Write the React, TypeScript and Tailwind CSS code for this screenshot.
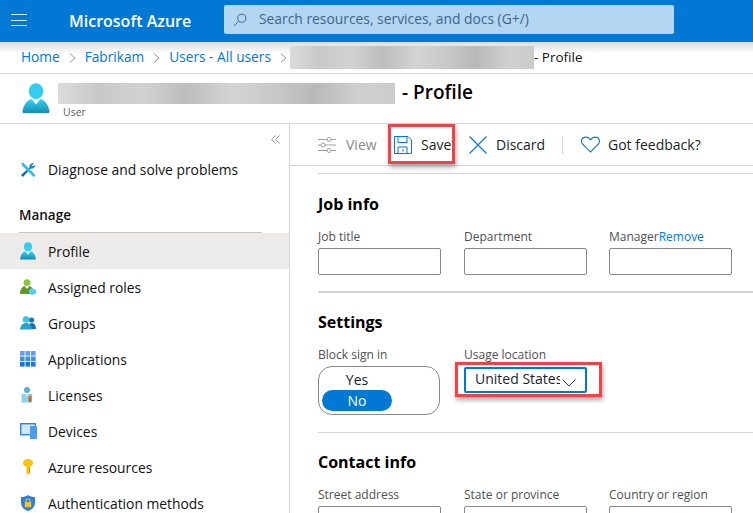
import React from 'react';

// shared svg defs live on each icon so the file stays a flat list of small components
const UserIcon = ({ className }: { className: string }) => (
  <svg viewBox="0 0 28 32" className={className}>
    <defs>
      <linearGradient id="ub" x1="0" y1="0" x2="0" y2="1">
        <stop offset="0" stopColor="#32d4f5" />
        <stop offset="1" stopColor="#198ab3" />
      </linearGradient>
    </defs>
    <ellipse cx="14" cy="8.5" rx="7.5" ry="8.2" fill="#32cdf0" />
    <path d="M1 31 C0 31 0 30 0.2 28.5 C1.5 22 5 17.5 9.5 16.5 L14 22 L18.5 16.5 C23 17.5 26.5 22 27.8 28.5 C28 30 28 31 27 31 Z" fill="url(#ub)" />
    <path d="M11 17.5 L14 22.5 L17 17.5 Z" fill="#fff" opacity="0.85" />
  </svg>
);

const WrenchIcon = () => (
  <svg viewBox="0 0 16 16" className="w-4 h-4">
    <path d="M3 15 L1 13 L10 5 L11 6 Z" fill="#0d6ba8" />
    <path d="M9.5 5.5 C9 3 11 0.5 14 1 L12 3.2 L13 4.2 L15.2 2.4 C15.6 5 13 7 10.8 6.6 Z" fill="#1f8dc9" />
    <path d="M1.5 1 L3 0.6 L15 12.5 L15 14 L13.5 15 L2 3.5 Z" fill="#32bdeb" />
  </svg>
);

const RolesIcon = () => (
  <svg viewBox="0 0 16 16" className="w-4 h-4">
    <circle cx="7" cy="3.6" r="3.4" fill="#86c440" />
    <path d="M0 15 C0 10 2.5 7.4 4.5 7 L7 10 L9.5 7 C12 7.4 13 10 13.5 15 Z" fill="#5e9624" />
    <path d="M12 9 L16 11 V14.5 L12 16 L9 14.5 V11 Z" fill="#59c9ef" />
  </svg>
);

const GroupsIcon = () => (
  <svg viewBox="0 0 16 16" className="w-4 h-4">
    <circle cx="11.6" cy="5" r="2.6" fill="#1a6fc2" />
    <path d="M8 14 C8 10 9.5 8 11.6 8 C14 8 16 10 16 14 Z" fill="#1a6fc2" />
    <circle cx="6" cy="4.4" r="3.2" fill="#32c4ea" />
    <path d="M0 14.5 C0.5 10.5 2.5 8 6 8 C9.5 8 11.5 10.5 12 14.5 Z" fill="#27a4cc" />
  </svg>
);

const AppsIcon = () => (
  <svg viewBox="0 0 16 16" className="w-4 h-4">
    {[0, 5.5, 11].map((y, r) =>
      [0, 5.5, 11].map((x) => (
        <rect key={`${x}-${y}`} x={x} y={y} width="4.6" height="4.6" fill={['#5ea0ef', '#3b8de8', '#1b74dc'][r]} />
      ))
    )}
  </svg>
);

const LicenseIcon = () => (
  <svg viewBox="0 0 16 16" className="w-4 h-4">
    <circle cx="7" cy="3" r="3" fill="#5aaed6" />
    <path d="M1.5 7 H12 V15.5 H1.5 Z" fill="#8cd0ec" />
    <path d="M6 7 L7 10 L8 7 Z" fill="#fff" />
    <circle cx="10" cy="10.5" r="2" fill="#e0762b" />
    <path d="M8.8 11.5 H11.2 V15.5 L10 14.5 L8.8 15.5 Z" fill="#c9571a" />
  </svg>
);

const DevicesIcon = () => (
  <svg viewBox="0 0 17 16" className="w-[17px] h-4 shrink-0">
    <rect x="0.7" y="0.7" width="14.6" height="11" fill="#cfe6fb" stroke="#2e86e4" strokeWidth="1.4" />
    <rect x="10" y="3" width="7" height="13" rx="0.8" fill="#4b9bf0" />
  </svg>
);

const KeyIcon = () => (
  <svg viewBox="0 0 16 16" className="w-4 h-4">
    <path d="M8 0 C11 0 13 1.5 13 4 C13 6 11.5 7.2 9.6 7.6 V13.5 L8 16 L6.4 14.5 V7.6 C4.5 7.2 3 6 3 4 C3 1.5 5 0 8 0 Z" fill="#fbc40a" />
    <rect x="9" y="8" width="1" height="6" fill="#e08e00" />
  </svg>
);

const ShieldIcon = () => (
  <svg viewBox="0 0 16 16" className="w-4 h-4">
    <path d="M8 0 C10 1.4 12.5 2 15 2 V8 C15 12 12 14.5 8 16 C4 14.5 1 12 1 8 V2 C3.5 2 6 1.4 8 0 Z" fill="#2f80dc" />
    <rect x="4.8" y="7" width="6.4" height="5.2" fill="#f7c325" />
    <path d="M6 7 V5.6 C6 3.4 10 3.4 10 5.6 V7" fill="none" stroke="#f7c325" strokeWidth="1.1" />
  </svg>
);

const navItems: { label: string; icon: React.ReactNode; active?: boolean }[] = [
  { label: 'Profile', icon: <UserIcon className="w-4 h-[18px]" />, active: true },
  { label: 'Assigned roles', icon: <RolesIcon /> },
  { label: 'Groups', icon: <GroupsIcon /> },
  { label: 'Applications', icon: <AppsIcon /> },
  { label: 'Licenses', icon: <LicenseIcon /> },
  { label: 'Devices', icon: <DevicesIcon /> },
  { label: 'Azure resources', icon: <KeyIcon /> },
  { label: 'Authentication methods', icon: <ShieldIcon /> },
];

const Chevron = () => (
  <svg viewBox="0 0 8 12" className="w-[7px] h-3 mx-[9px] shrink-0">
    <path d="M1 1 L7 6 L1 11" fill="none" stroke="#8a8886" strokeWidth="1" />
  </svg>
);

const Blur = ({ className }: { className: string }) => (
  <div className={`bg-[linear-gradient(90deg,#dcdcdc_0%,#c8c8c8_12%,#d2d2d2_25%,#bdbdbd_38%,#d4d4d4_52%,#c6c6c6_66%,#b9b9b9_76%,#d0d0d0_90%,#cbcbcb_100%)] ${className}`} />
);

const Field = ({ label, extra }: { label: string; extra?: string }) => (
  <div className="w-[123px] flex flex-col">
    <div className="text-[12px] leading-[16px] text-[#505050] whitespace-nowrap">
      {label}
      {extra && <span className="text-[#0078d4]">{extra}</span>}
    </div>
    <div className="mt-[3px] h-[27px] border border-[#8a8886] rounded-[2px] bg-white" />
  </div>
);

export default function App() {
  return (
    <div className="w-[753px] h-[513px] overflow-hidden bg-white flex flex-col font-['Open_Sans','Liberation_Sans',sans-serif] text-[#201f1e]">
      {/* top bar */}
      <header className="h-[42px] shrink-0 bg-[#0078d4] flex items-center">
        <div className="w-[16px] ml-[11px] -mt-[2px] flex flex-col gap-[4.5px]">
          <span className="h-px bg-[#d5e8f8]" />
          <span className="h-px bg-[#d5e8f8]" />
          <span className="h-px bg-[#d5e8f8]" />
        </div>
        <span className="ml-[42px] w-[155px] text-[16px] font-semibold text-white whitespace-nowrap">Microsoft Azure</span>
        <div className="w-[450px] h-[29px] -mt-[3px] bg-[#b3d6f2] rounded-[2px] flex items-center pl-[9px]">
          <svg viewBox="0 0 16 16" className="w-[14px] h-[14px] shrink-0">
            <circle cx="10" cy="6" r="4.6" fill="none" stroke="#2f5f95" strokeWidth="1" />
            <path d="M6.6 9.4 L1 15" stroke="#2f5f95" strokeWidth="1" />
          </svg>
          <span className="ml-[12px] text-[13.85px] text-[#3d6591] whitespace-nowrap">Search resources, services, and docs (G+/)</span>
        </div>
      </header>

      {/* breadcrumb */}
      <nav className="h-[32px] shrink-0 border-b border-[#d6d6d6] flex items-center pl-[21px] text-[13.7px] bg-[linear-gradient(180deg,#dcdcdc_0px,#ffffff_12px)]">
        <span className="text-[#0078d4]">Home</span>
        <Chevron />
        <span className="text-[#0078d4]">Fabrikam</span>
        <Chevron />
        <span className="text-[#0078d4] whitespace-nowrap">Users - All users</span>
        <Chevron />
        <Blur className="w-[244px] h-[23px] -ml-[6px] shrink-0" />
        <span className="text-[13.5px] whitespace-nowrap text-[#111]">- Profile</span>
      </nav>

      {/* page title */}
      <div className="h-[50px] shrink-0 border-b border-[#d6d6d6] flex items-start pl-[22px] pt-[9px]">
        <UserIcon className="w-[28px] h-[31px] shrink-0" />
        <div className="ml-[8px] w-[337px]">
          <Blur className="w-[337px] h-[21px]" />
          <div className="ml-[5px] mt-[1px] text-[10.5px] leading-[14px] text-[#605e5c]">User</div>
        </div>
        <span className="ml-[7px] -mt-[5px] text-[19px] font-semibold text-black whitespace-nowrap">- Profile</span>
      </div>

      <div className="flex flex-1 min-h-0">
        {/* sidebar */}
        <aside className="w-[290px] shrink-0 border-r border-[#d6d6d6] flex flex-col">
          <div className="h-[28px] shrink-0 flex justify-end items-center pr-[9px] pt-[2px]">
            <svg viewBox="0 0 10 10" className="w-[9px] h-[9px]">
              <path d="M5 0.5 L0.7 5 L5 9.5 M9.5 0.5 L5.2 5 L9.5 9.5" fill="none" stroke="#7a7a7a" strokeWidth="0.9" />
            </svg>
          </div>
          <div className="h-[36px] shrink-0 flex items-center pl-[20px]">
            <WrenchIcon />
            <span className="ml-[12px] text-[13.85px] whitespace-nowrap text-[#111]">Diagnose and solve problems</span>
          </div>
          <div className="ml-[19px] mt-[17px] h-[28px] shrink-0 w-[243px] border-b border-[#c8c6c4] text-[13.5px] font-semibold text-[#111]">Manage</div>
          {navItems.map((item) => (
            <div key={item.label} className={`h-[36px] shrink-0 flex items-center pl-[20px] ${item.active ? 'bg-[#edebe9]' : ''}`}>
              <span className="w-4 flex justify-center">{item.icon}</span>
              <span className="ml-[12px] pt-[2px] text-[13.85px] whitespace-nowrap text-[#111]">{item.label}</span>
            </div>
          ))}
        </aside>

        {/* main */}
        <main className="flex-1 min-w-0 flex flex-col">
          <div className="h-[42px] shrink-0 border-b border-[#d6d6d6] flex items-center pl-[28px] relative text-[14px]">
            <svg viewBox="0 0 18 18" className="w-[18px] h-[18px] shrink-0">
              <g fill="none" stroke="#a19f9d" strokeWidth="1">
                <path d="M0 3.5 H9 M13 3.5 H18 M0 9 H3 M7 9 H18 M0 14.5 H9 M13 14.5 H18" />
                <circle cx="11" cy="3.5" r="2" />
                <circle cx="5" cy="9" r="2" />
                <circle cx="11" cy="14.5" r="2" />
              </g>
            </svg>
            <span className="ml-[10px] w-[48px] text-[#8a8886]">View</span>
            <svg viewBox="0 0 18 18" className="w-[18px] h-[18px] shrink-0">
              <path d="M0.5 0.5 H14 L17.5 4 V17.5 H0.5 Z M4 0.5 V6.5 H13 V0.5 M4 17.5 V11 H13 V17.5 M9 13 V15.5" fill="none" stroke="#0078d4" strokeWidth="1" />
            </svg>
            <span className="ml-[9px] w-[48px]">Save</span>
            <svg viewBox="0 0 18 18" className="w-[18px] h-[18px] shrink-0">
              <path d="M0.5 0.5 L17.5 17.5 M17.5 0.5 L0.5 17.5" stroke="#0078d4" strokeWidth="1.1" />
            </svg>
            <span className="ml-[9px] w-[48px] whitespace-nowrap">Discard</span>
            <span className="ml-[18px] w-px h-[18px] bg-[#d6d6d6]" />
            <svg viewBox="0 0 18 16" className="ml-[18px] w-[19px] h-[17px] shrink-0">
              <path d="M9 15 L1.6 7.6 C-0.6 5 0.8 1 4.4 1 C6.4 1 8 2 9 3.6 C10 2 11.6 1 13.6 1 C17.2 1 18.6 5 16.4 7.6 Z" fill="none" stroke="#0078d4" strokeWidth="1" />
            </svg>
            <span className="ml-[8px] whitespace-nowrap">Got feedback?</span>
            {/* red callout over Save */}
            <div className="absolute left-[98px] top-0 w-[67px] h-[40px] border-[3px] border-[#f04249] shadow-[1px_3px_5px_rgba(0,0,0,0.35)]" />
          </div>

          <div className="pl-[28px] pt-[7px] flex-1 min-h-0 overflow-hidden">
            <div className="border-t border-[#d6d6d6] pt-[19px]">
              <h2 className="text-[16px] leading-[22px] font-bold text-black">Job info</h2>
              <div className="mt-[14px] grid grid-cols-[146px_145px_123px]">
                <Field label="Job title" />
                <Field label="Department" />
                <Field label="Manager" extra="Remove" />
              </div>
            </div>

            <div className="mt-[16px] border-t-2 border-[#d2d2d2] pt-[18px]">
              <h2 className="text-[16px] leading-[22px] font-bold text-black">Settings</h2>
              <div className="mt-[14px] flex gap-[24px]">
                <div className="w-[122px]">
                  <div className="text-[12px] leading-[16px] text-[#505050]">Block sign in</div>
                  <div className="mt-[3px] h-[49px] border border-[#8a8886] rounded-[14px] p-[3px] flex flex-col text-[14px]">
                    <div className="w-[70px] h-[21px] text-center leading-[19px]">Yes</div>
                    <div className="w-[70px] h-[21px] rounded-full bg-[#0078d4] text-white text-center leading-[22px]">No</div>
                  </div>
                </div>
                <div className="w-[123px] relative">
                  <div className="text-[12px] leading-[16px] text-[#505050]">Usage location</div>
                  <div className="mt-[4px] h-[26px] border-2 border-[#0078d4] rounded-[2px] flex items-center pl-[9px] overflow-hidden">
                    <span className="w-[85px] -mt-[3px] overflow-hidden whitespace-nowrap text-[14px]">United States</span>
                    <svg viewBox="0 0 14 8" className="ml-[2px] mt-[5px] w-[14px] h-[8px] shrink-0">
                      <path d="M0.5 0.5 L7 7 L13.5 0.5" fill="none" stroke="#323130" strokeWidth="1" />
                    </svg>
                  </div>
                  {/* red callout over the select */}
                  <div className="absolute -left-[9px] top-[15px] w-[147px] h-[35px] border-[3px] border-[#f04249] shadow-[1px_3px_5px_rgba(0,0,0,0.35)]" />
                </div>
              </div>
            </div>

            <div className="mt-[17px] border-t border-[#d6d6d6] pt-[18px]">
              <h2 className="text-[16px] leading-[22px] font-bold text-black">Contact info</h2>
              <div className="mt-[14px] grid grid-cols-[146px_145px_123px]">
                <Field label="Street address" />
                <Field label="State or province" />
                <Field label="Country or region" />
              </div>
            </div>
          </div>
        </main>
      </div>
    </div>
  );
}
